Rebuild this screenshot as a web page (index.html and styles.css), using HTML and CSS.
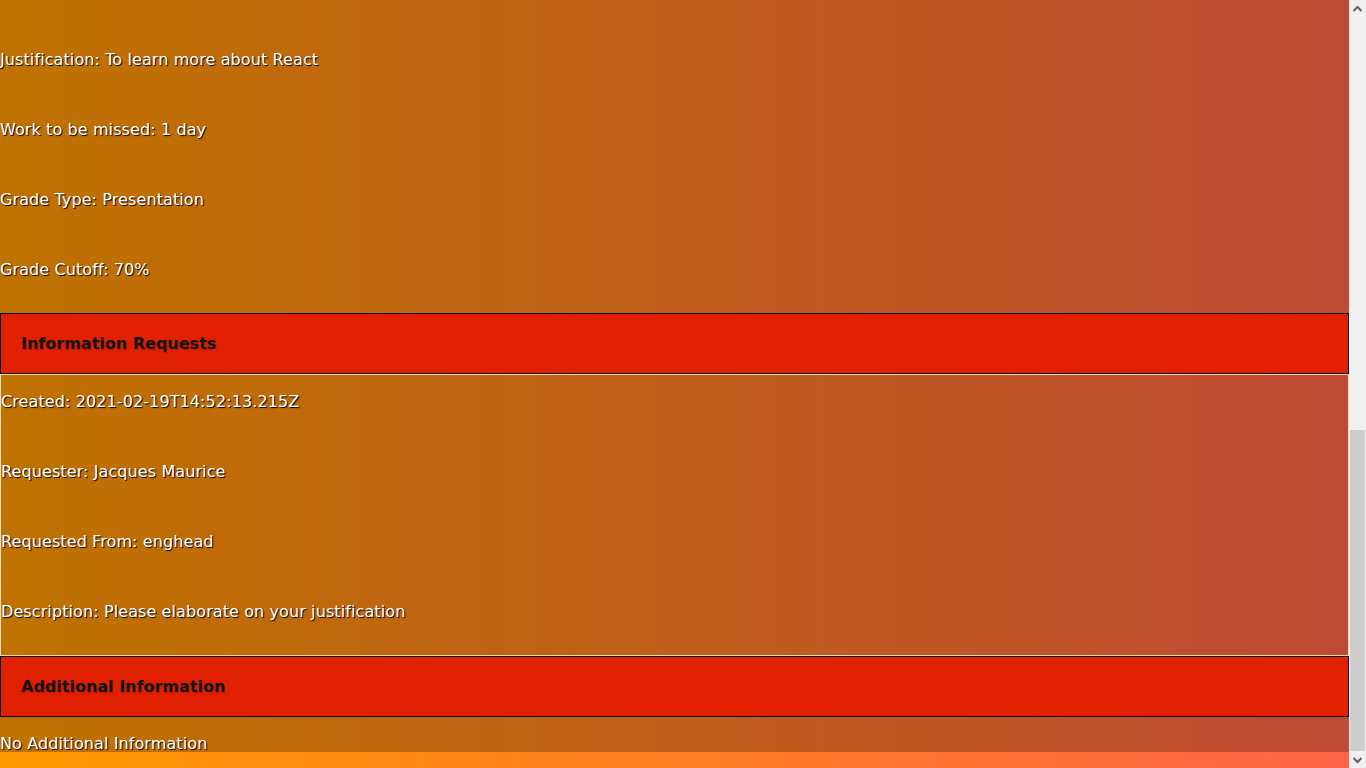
FILE: index.html
```html
<!DOCTYPE html>
<html lang="en">
<head>
<meta charset="utf-8">
<title>Request Details</title>
<link rel="stylesheet" href="styles.css">
</head>
<body>
<div class="viewport">
  <main class="details">
    <section class="section">
      <div class="fields first">
        <p class="field">Justification: To learn more about React</p>
        <p class="field">Work to be missed: 1 day</p>
        <p class="field">Grade Type: Presentation</p>
        <p class="field">Grade Cutoff: 70%</p>
      </div>
    </section>

    <section class="section">
      <h3 class="section-title">Information Requests</h3>
      <div class="fields card">
        <p class="field">Created: 2021-02-19T14:52:13.215Z</p>
        <p class="field">Requester: Jacques Maurice</p>
        <p class="field">Requested From: enghead</p>
        <p class="field">Description: Please elaborate on your justification</p>
      </div>
    </section>

    <section class="section">
      <h3 class="section-title">Additional Information</h3>
      <div class="fields last">
        <p class="field">No Additional Information</p>
      </div>
    </section>
  </main>
</div>
<aside class="scrollbar" aria-hidden="true">
  <div class="sb-btn">
    <svg width="17" height="17" viewBox="0 0 17 17"><polyline points="4.5,11 8.5,7 12.5,11" fill="none" stroke="#606060" stroke-width="2"/></svg>
  </div>
  <div class="sb-track"><div class="sb-thumb"></div></div>
  <div class="sb-btn">
    <svg width="17" height="16" viewBox="0 0 17 16"><polyline points="4.5,6 8.5,10 12.5,6" fill="none" stroke="#606060" stroke-width="2"/></svg>
  </div>
</aside>
</body>
</html>
```

FILE: styles.css
```css
html, body {
  height: 100%;
}
body {
  margin: 0;
  display: flex;
  overflow: hidden;
  font-family: "DejaVu Sans", Verdana, sans-serif;
  font-size: 16px;
  color: #ffffff;
  background: #f0f0f0;
}
.viewport {
  flex: 1;
  min-width: 0;
  padding-bottom: 16px;
  background: linear-gradient(to right, #ff9900, #ff6347);
  overflow: hidden;
}
.details {
  background: rgba(0, 0, 0, 0.25);
}
.section-title {
  margin: 0;
  padding: 20px 20px;
  line-height: 19px;
  font-size: 16px;
  font-weight: bold;
  color: #141414;
  text-shadow: 1px 1px 1px rgba(0, 0, 0, 0.2);
  background: #e02000;
  border: 1px solid #000000;
}
.fields {
  display: flex;
  flex-direction: column;
  gap: 51px;
  padding: 16px 0 35px;
}
.fields.first {
  padding-top: 49px;
}
.fields.card {
  border: 1px solid #f5deb3;
}
.fields.last {
  padding-bottom: 0;
}
.field {
  margin: 0;
  padding-top: 2px;
  line-height: 17px;
  letter-spacing: 0.1px;
  white-space: nowrap;
  text-shadow: 1px 1px 1px #000000;
}
.scrollbar {
  width: 17px;
  flex: none;
  display: flex;
  flex-direction: column;
  background: #f0f0f0;
}
.sb-btn {
  display: flex;
  justify-content: center;
  flex: none;
}
.sb-btn svg {
  display: block;
}
.sb-track {
  flex: 1;
  display: flex;
  flex-direction: column;
  justify-content: flex-end;
  padding: 0 1px 1px;
}
.sb-thumb {
  height: 321px;
  background: #cdcdcd;
}
```
